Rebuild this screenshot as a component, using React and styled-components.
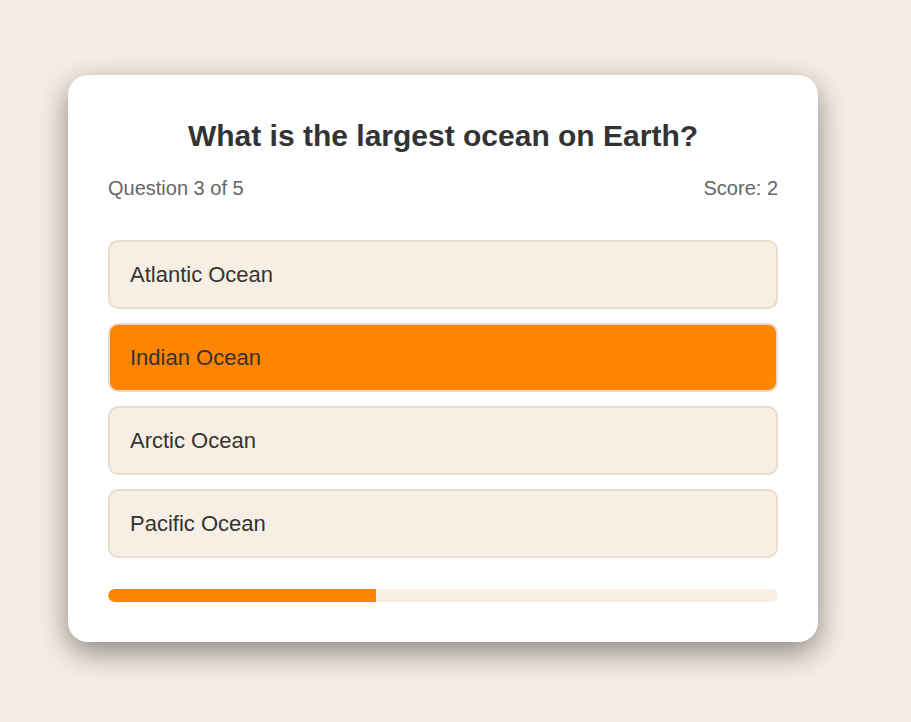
import React from "react";
import styled, { createGlobalStyle } from "styled-components";

const GlobalStyle = createGlobalStyle`
  html, body {
    margin: 0;
    padding: 0;
    background: #f6eee5;
    font-family: "Liberation Sans", Arial, sans-serif;
  }
  * { box-sizing: border-box; }
`;

const Page = styled.div`
  min-height: 722px;
  padding: 75px 0 0 68px;
`;

const Card = styled.div`
  width: 750px;
  background: #ffffff;
  border-radius: 20px;
  padding: 44px 40px 40px;
  box-shadow: 0 10px 30px rgba(0, 0, 0, 0.45);
`;

const Title = styled.h1`
  margin: 0;
  font-size: 30px;
  font-weight: 700;
  color: #333333;
  text-align: center;
`;

const Meta = styled.div`
  display: flex;
  justify-content: space-between;
  margin-top: 24px;
  font-size: 20px;
  color: #666666;
`;

const Options = styled.div`
  display: flex;
  flex-direction: column;
  gap: 14px;
  margin-top: 40px;
`;

const Option = styled.button`
  display: block;
  width: 100%;
  text-align: left;
  font-family: inherit;
  font-size: 22px;
  color: #333333;
  padding: 21px 20px;
  line-height: 23px;
  border: 2px solid #eadccb;
  border-radius: 10px;
  background: ${(p) => (p.$selected ? "#ff8400" : "#f7efe4")};
  cursor: pointer;
`;

const Progress = styled.div`
  margin-top: 31px;
  height: 13px;
  border-radius: 7px;
  background: #f7efe4;
  overflow: hidden;
`;

const Fill = styled.div`
  height: 100%;
  background: #ff8400;
  border-radius: 7px 0 0 7px;
`;

const options = ["Atlantic Ocean", "Indian Ocean", "Arctic Ocean", "Pacific Ocean"];

export default function App() {
  const current = 3;
  const total = 5;
  const pct = ((current - 1) / total) * 100;
  return (
    <>
      <GlobalStyle />
      <Page>
        <Card>
          <Title>What is the largest ocean on Earth?</Title>
          <Meta>
            <span>Question {current} of {total}</span>
            <span>Score: 2</span>
          </Meta>
          <Options>
            {options.map((o) => (
              <Option key={o} $selected={o === "Indian Ocean"}>
                {o}
              </Option>
            ))}
          </Options>
          <Progress>
            <Fill style={{ width: `${pct}%` }} />
          </Progress>
        </Card>
      </Page>
    </>
  );
}
